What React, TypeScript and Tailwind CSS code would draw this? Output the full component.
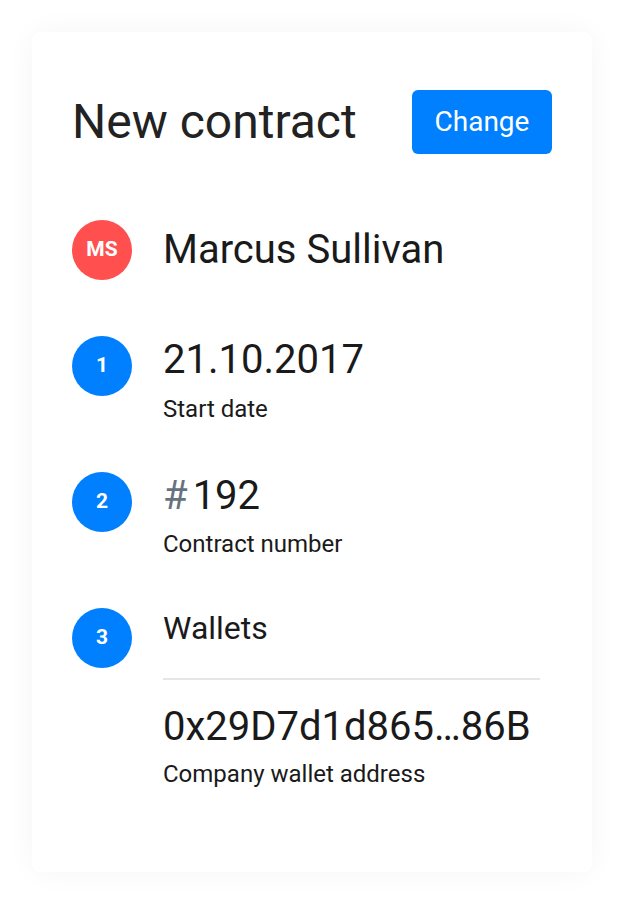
import React from "react";

function Circle({ children, red }: { children: React.ReactNode; red?: boolean }) {
  return (
    <div
      className={`flex h-[60px] w-[60px] shrink-0 items-center justify-center rounded-full text-[21px] font-bold text-white ${
        red ? "bg-[#ff4f4f]" : "bg-[#0080ff]"
      }`}
    >
      {children}
    </div>
  );
}

export default function App() {
  return (
    <div
      className="min-h-[904px] w-[624px] bg-white p-8"
      style={{ fontFamily: "Roboto, 'Noto Sans', sans-serif" }}
    >
      <div className="flex h-[840px] flex-col rounded-lg bg-white pl-10 pr-10 pt-[58px] shadow-[0_0_28px_rgba(0,0,0,0.045)]">
        <div className="flex items-center justify-between">
          <h1 className="text-[48px] leading-[56px] font-normal text-[#222222]">New contract</h1>
          <button className="flex h-16 w-[140px] items-center justify-center rounded-md bg-[#0080ff] text-[28px] text-white">
            Change
          </button>
        </div>

        <div className="mt-[66px] flex items-center gap-[31px]">
          <Circle red>MS</Circle>
          <div className="text-[40px] leading-[48px] text-[#1a1a1a]">Marcus Sullivan</div>
        </div>

        <div className="mt-[56px] flex items-start gap-[31px]">
          <Circle>1</Circle>
          <div className="flex flex-col">
            <div className="text-[40px] leading-[48px] text-[#1a1a1a]">21.10.2017</div>
            <div className="mt-[11px] text-[24px] leading-[28px] text-[#1a1a1a]">Start date</div>
          </div>
        </div>

        <div className="mt-[49px] flex items-start gap-[31px]">
          <Circle>2</Circle>
          <div className="flex flex-col">
            <div className="text-[40px] leading-[48px] text-[#1a1a1a]">
              <span className="mr-[5px] text-[#67727e]">#</span>192
            </div>
            <div className="mt-[10px] text-[24px] leading-[28px] text-[#1a1a1a]">Contract number</div>
          </div>
        </div>

        <div className="mt-[50px] flex items-start gap-[31px]">
          <Circle>3</Circle>
          <div className="flex flex-1 flex-col pr-[12px]">
            <div className="text-[32px] leading-[40px] text-[#1a1a1a]">Wallets</div>
            <div className="mt-[30px] h-[2px] w-full bg-[#e6e6ea]" />
            <div className="mt-[23px] text-[40px] leading-[48px] text-[#1a1a1a]">0x29D7d1d865…86B</div>
            <div className="mt-[9px] text-[24px] leading-[28px] text-[#1a1a1a]">Company wallet address</div>
          </div>
        </div>
      </div>
    </div>
  );
}
